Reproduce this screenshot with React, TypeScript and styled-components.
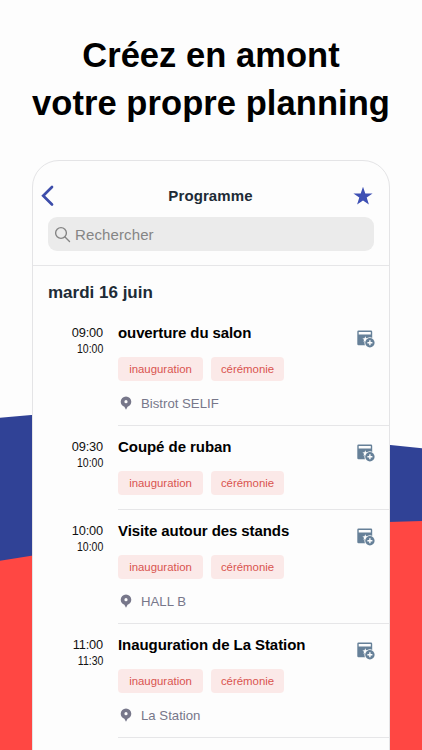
import React from "react";
import styled, { createGlobalStyle } from "styled-components";

const GlobalStyle = createGlobalStyle`
  *, *::before, *::after { box-sizing: border-box; }
  html, body { margin: 0; height: 100%; overflow: hidden; background: #fdfdfd; }
  body { font-family: "Liberation Sans", Arial, sans-serif; }
`;

const Page = styled.main`
  position: relative;
  width: 422px;
  height: 750px;
  overflow: hidden;
  background: #fdfdfd;
`;

const Backdrop = styled.svg`
  position: absolute;
  inset: 0;
  display: block;
`;

const Content = styled.div`
  position: relative;
  display: flex;
  flex-direction: column;
  align-items: center;
  height: 100%;
`;

const Headline = styled.h1`
  margin: 0;
  height: 160px;
  flex: none;
  padding-top: 31px;
  text-align: center;
  white-space: nowrap;
  font-size: 34.5px;
  line-height: 48px;
  font-weight: 700;
  color: #000;
`;

const HeadLine = styled.span<{ $spacing: number }>`
  display: block;
  letter-spacing: ${(p) => p.$spacing}px;
`;

const Card = styled.section`
  flex: none;
  width: 358px;
  height: 620px;
  border: 1px solid #e4e4e6;
  border-radius: 27px 27px 0 0;
  background: #fdfdfd;
  overflow: hidden;
`;

const TopBar = styled.header`
  display: grid;
  grid-template-columns: 35px 1fr 36px;
  align-items: center;
  height: 35px;
  margin-top: 17px;
`;

const BackIcon = styled.svg`
  display: block;
  margin-left: 8px;
`;

const Title = styled.h2`
  margin: 0;
  font-size: 15px;
  line-height: 20px;
  font-weight: 700;
  letter-spacing: 0.1px;
  text-align: center;
  color: #202b36;
`;

const StarIcon = styled.svg`
  display: block;
  margin-left: -0.5px;
`;

const SearchField = styled.div`
  display: flex;
  align-items: center;
  gap: 4px;
  height: 34px;
  margin: 4px 15px 0;
  padding-left: 6px;
  border-radius: 9px;
  background: #ebebeb;
  color: #858585;
  font-size: 15px;
  letter-spacing: 0.12px;
`;

const Day = styled.h3`
  margin: 14px 0 0;
  height: 47px;
  padding: 0 15px;
  border-top: 1px solid #e6e6e8;
  font-size: 17px;
  line-height: 54px;
  color: #202b36;
`;

const Row = styled.article<{ $tall: boolean }>`
  display: grid;
  grid-template-columns: 85px 1fr;
  height: ${(p) => (p.$tall ? 114 : 84)}px;
`;

const Times = styled.div`
  display: flex;
  flex-direction: column;
  align-items: flex-end;
  padding: 13px 15px 0 0;
  color: #111;
`;

const Start = styled.time`
  font-size: 12.8px;
  line-height: 16px;
  letter-spacing: -0.15px;
`;

const End = styled.time`
  font-size: 12.5px;
  line-height: 16px;
  transform: scaleX(0.84);
  transform-origin: right center;
`;

const Details = styled.div`
  border-bottom: 1px solid #e6e6e8;
`;

const Heading = styled.div`
  display: flex;
  justify-content: space-between;
  height: 45px;
  padding: 12px 14px 0 0;
`;

const Name = styled.h4<{ $spacing: number }>`
  margin: 0;
  font-size: 15px;
  line-height: 18px;
  letter-spacing: ${(p) => p.$spacing}px;
  color: #000;
`;

const AddIcon = styled.svg`
  display: block;
  margin-top: 6px;
`;

const Tags = styled.div`
  display: flex;
  gap: 8px;
`;

const Tag = styled.span<{ $width: number }>`
  width: ${(p) => p.$width}px;
  height: 24px;
  border-radius: 4px;
  background: #fbe9e8;
  color: #d9544f;
  font-size: 11.4px;
  line-height: 24px;
  text-align: center;
`;

const Place = styled.div`
  display: flex;
  align-items: center;
  gap: 9px;
  height: 20px;
  margin-top: 12px;
  padding-left: 2px;
  font-size: 13.2px;
  color: #77778a;
`;

const Pin = () => (
  <svg width="12" height="14" viewBox="0 0 12 14">
    <path
      fill="#77778a"
      fillRule="evenodd"
      d="M6 .5A5.300 5.300 0 0 0 .7 5.800c0 2.500 1.800 4.200 3.700 5L6 13.700l1.600-2.900c1.900-.8 3.700-2.500 3.700-5A5.300 5.300 0 0 0 6 .5Zm0 3.600a1.600 1.600 0 1 1 0 3.200 1.600 1.600 0 0 1 0-3.200Z"
    />
  </svg>
);

const AddToCalendar = () => (
  <AddIcon width="18" height="18" viewBox="0 0 18 18">
    <path
      fill="#668098"
      fillRule="evenodd"
      d="M1.500.5h12.500q1.200 0 1.200 1.200V10H8.500v5.200H1.500Q.3 15.200.3 14V1.700Q.3.5 1.500.5ZM1.700 1.900v2.700h12.100V1.900Z"
    />
    <path fill="#fdfdfd" d="m8.300 6.300.8 1.900 2.100.2-1.600 1.400.4 2.100-1.700-1.100-1.800 1.100.5-2.100-1.600-1.400 2.100-.2Z" />
    <circle cx="12.900" cy="12.700" r="5.500" fill="#fdfdfd" />
    <circle cx="12.900" cy="12.700" r="4.700" fill="#668098" />
    <path d="M12.900 10.200V15.200M10.400 12.700h5" stroke="#fdfdfd" strokeWidth="1.400" />
  </AddIcon>
);

interface Session {
  start: string;
  end: string;
  name: string;
  spacing: number;
  place?: string;
}

const sessions: Session[] = [
  { start: "09:00", end: "10:00", name: "ouverture du salon", spacing: -0.1, place: "Bistrot SELIF" },
  { start: "09:30", end: "10:00", name: "Coupé de ruban", spacing: -0.05 },
  { start: "10:00", end: "10:00", name: "Visite autour des stands", spacing: -0.08, place: "HALL B" },
  { start: "11:00", end: "11:30", name: "Inauguration de La Station", spacing: -0.07, place: "La Station" },
];

export default function App() {
  return (
    <Page>
      <GlobalStyle />
      <Backdrop width="422" height="750" viewBox="0 0 422 750">
        <path fill="#304296" d="M0 417.700 34 414.700V570H0Z" />
        <path fill="#304296" d="M388 444.700 422 448.300V540H388Z" />
        <path fill="#ff4743" d="M0 560.700 33 555.500 388 522 422 521V750H0Z" />
      </Backdrop>
      <Content>
        <Headline>
          <HeadLine $spacing={0.05}>Créez en amont</HeadLine>
          <HeadLine $spacing={0.07}>votre propre planning</HeadLine>
        </Headline>
        <Card>
          <TopBar>
            <BackIcon width="14" height="22" viewBox="0 0 14 22">
              <path d="M11 2 2.200 10.700 11 19.500" fill="none" stroke="#3d4daa" strokeWidth="2.700" strokeLinecap="round" />
            </BackIcon>
            <Title>Programme</Title>
            <StarIcon width="20" height="20" viewBox="0 0 20 20">
              <path fill="#3e50b4" d="m10 .7 2.300 6.700h7.300l-5.900 4.200 2.200 7L10 14.500l-5.900 4.100 2.200-7L.4 7.400h7.300Z" />
            </StarIcon>
          </TopBar>
          <SearchField>
            <svg width="17" height="17" viewBox="0 0 17 17" fill="none" stroke="#858585" strokeWidth="1.400">
              <circle cx="7" cy="7" r="5.400" />
              <path d="m11 11 4.500 4.400" strokeLinecap="round" />
            </svg>
            <span>Rechercher</span>
          </SearchField>
          <Day>mardi 16 juin</Day>
          {sessions.map((s) => (
            <Row key={s.start} $tall={!!s.place}>
              <Times>
                <Start>{s.start}</Start>
                <End>{s.end}</End>
              </Times>
              <Details>
                <Heading>
                  <Name $spacing={s.spacing}>{s.name}</Name>
                  <AddToCalendar />
                </Heading>
                <Tags>
                  <Tag $width={85}>inauguration</Tag>
                  <Tag $width={73}>cérémonie</Tag>
                </Tags>
                {s.place && (
                  <Place>
                    <Pin />
                    <span>{s.place}</span>
                  </Place>
                )}
              </Details>
            </Row>
          ))}
        </Card>
      </Content>
    </Page>
  );
}
